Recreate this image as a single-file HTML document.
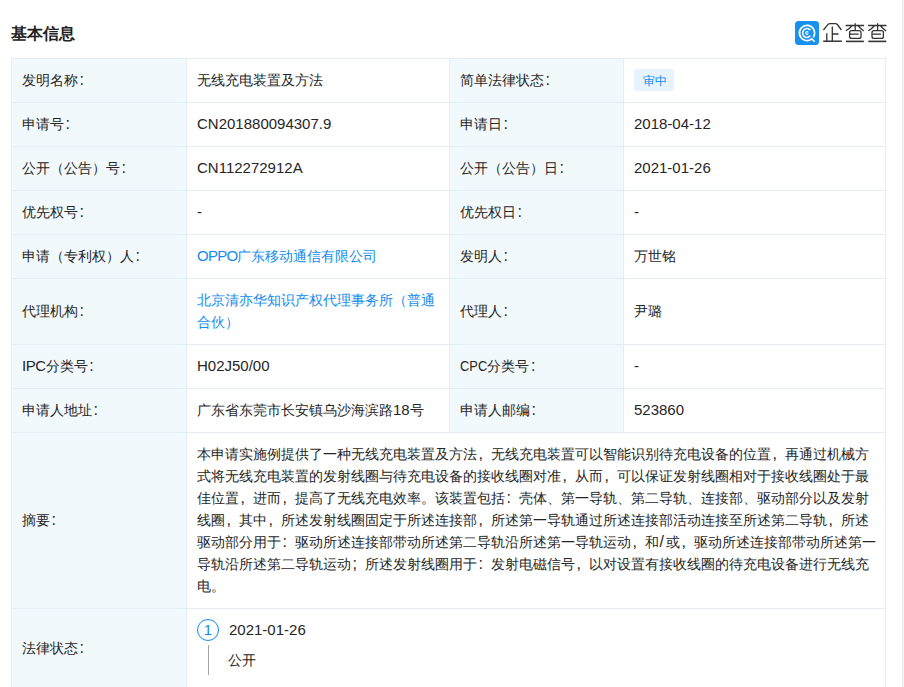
<!DOCTYPE html>
<html><head><meta charset="utf-8">
<style>
html,body{margin:0;padding:0;background:#fff;}
body{width:904px;height:687px;overflow:hidden;position:relative;font-family:"Liberation Sans",sans-serif;color:#262626;font-size:14px;}
.title{position:absolute;left:11px;top:22px;font-size:16px;font-weight:bold;line-height:24px;color:#222;}
.logo{position:absolute;left:795px;top:21px;}
.sb{position:absolute;left:902px;top:0;width:1px;height:687px;background:#ececec;}
.sb2{position:absolute;left:903px;top:0;width:1px;height:687px;background:#f5f5f5;}
table{position:absolute;left:11px;top:58px;border-collapse:collapse;table-layout:fixed;width:874px;}
td{border:1px solid #e4eef6;padding:0 10px 2px;line-height:22px;vertical-align:middle;height:44px;box-sizing:border-box;}
td.tb{background:#f2f9fc;}
.n{font-size:15px;}
a{color:#128bed;text-decoration:none;}
.tag{display:inline-block;background:#e7f4ff;color:#128bed;font-size:12px;line-height:22px;height:22px;padding:0 8px;border-radius:2px;vertical-align:middle;}
.ab div{white-space:nowrap;}
.circ{position:absolute;left:197px;top:619px;width:22px;height:22px;box-sizing:border-box;border:1px solid #128bed;border-radius:50%;color:#128bed;font-size:15px;line-height:20px;text-align:center;}
.dt{position:absolute;left:229px;top:619px;font-size:15px;line-height:22px;}
.vl{position:absolute;left:208px;top:645px;width:1px;height:30px;background:#a3a3a3;}
.ds{position:absolute;left:228px;top:649px;line-height:22px;}
.p{font-style:normal;display:inline-block;width:14px;font-size:16px;padding-left:1.5px;box-sizing:border-box;}
.tag span{position:relative;top:1px;left:1px;}
</style></head><body>
<div class="title">基本信息</div>
<svg class="logo" width="96" height="26" viewBox="0 0 96 26">
<rect x="0" y="0" width="24" height="24" rx="3.5" fill="#1790ee"/>
<g fill="none" stroke="#fff" stroke-linecap="round">
<path d="M16.78 17.91 A7.6 7.6 0 1 1 18.58 15.8" stroke-width="1.7"/>
<path d="M16.6 17.9 L19.2 20.2" stroke-width="1.6"/>
<path d="M14.8 8.67 A4.35 4.35 0 1 0 14.91 15.23" stroke-width="1.7"/>
<path d="M12.9 11.0 A1.35 1.35 0 1 0 12.9 13.0" stroke-width="1.2"/>
</g>
<g fill="none" stroke="#333" stroke-width="1.3">
<path d="M28.4 9.0 L33.1 3.35 Q33.9 2.6 35 2.6 L40.5 2.6 Q41.6 2.6 42.4 3.5 L46.4 9.0"/>
<path d="M37.3 5.6 V20.2 M37.3 13 H43.5 M31.8 12.2 V20.2"/>
<path d="M28.2 20.2 H46.8" stroke-width="1.5"/>
<g>
<path d="M50.7 4.5 H69.1 M60.2 2.2 V9.7 M57.1 4.7 Q54 8 50.9 9.8 M63 4.7 Q66 8 68.7 10 M55 13.2 H63.6"/>
<rect x="54.6" y="9.7" width="11.4" height="7.7" rx="2"/>
<path d="M50.9 20.4 H68.9" stroke-width="1.6"/>
</g>
<g transform="translate(22.4 0)">
<path d="M50.7 4.5 H69.1 M60.2 2.2 V9.7 M57.1 4.7 Q54 8 50.9 9.8 M63 4.7 Q66 8 68.7 10 M55 13.2 H63.6"/>
<rect x="54.6" y="9.7" width="11.4" height="7.7" rx="2"/>
<path d="M50.9 20.4 H68.9" stroke-width="1.6"/>
</g>
</g>
</svg>
<div class="sb"></div><div class="sb2"></div>
<table>
<colgroup><col style="width:175px"><col style="width:263px"><col style="width:174px"><col style="width:262px"></colgroup>
<tr><td class="tb">发明名称<i class="p">:</i></td><td>无线充电装置及方法</td><td class="tb">简单法律状态<i class="p">:</i></td><td><span class="tag"><span>审中</span></span></td></tr>
<tr><td class="tb">申请号<i class="p">:</i></td><td><span class="n">CN201880094307.9</span></td><td class="tb">申请日<i class="p">:</i></td><td><span class="n">2018-04-12</span></td></tr>
<tr><td class="tb">公开（公告）号<i class="p">:</i></td><td><span class="n">CN112272912A</span></td><td class="tb">公开（公告）日<i class="p">:</i></td><td><span class="n">2021-01-26</span></td></tr>
<tr><td class="tb">优先权号<i class="p">:</i></td><td><span class="n">-</span></td><td class="tb">优先权日<i class="p">:</i></td><td><span class="n">-</span></td></tr>
<tr><td class="tb">申请（专利权）人<i class="p">:</i></td><td><a><span class="n" style="letter-spacing:-0.75px">OPPO</span>广东移动通信有限公司</a></td><td class="tb">发明人<i class="p">:</i></td><td>万世铭</td></tr>
<tr><td class="tb" style="height:66px">代理机构<i class="p">:</i></td><td><a>北京清亦华知识产权代理事务所（普通<br>合伙）</a></td><td class="tb">代理人<i class="p">:</i></td><td>尹璐</td></tr>
<tr><td class="tb"><span class="n" style="letter-spacing:-0.45px">IPC</span>分类号<i class="p">:</i></td><td><span class="n">H02J50/00</span></td><td class="tb"><span class="n" style="display:inline-block;transform:scaleX(.86);transform-origin:0 0;margin-right:-4.3px">CPC</span>分类号<i class="p">:</i></td><td><span class="n">-</span></td></tr>
<tr><td class="tb">申请人地址<i class="p">:</i></td><td>广东省东莞市长安镇乌沙海滨路<span class="n">18</span>号</td><td class="tb">申请人邮编<i class="p">:</i></td><td><span class="n">523860</span></td></tr>
<tr><td class="tb" style="height:176px">摘要<i class="p">:</i></td><td colspan="3" class="ab">
<div>本申请实施例提供了一种无线充电装置及方法<i class="p">,</i>无线充电装置可以智能识别待充电设备的位置<i class="p">,</i>再通过机械方</div>
<div>式将无线充电装置的发射线圈与待充电设备的接收线圈对准<i class="p">,</i>从而<i class="p">,</i>可以保证发射线圈相对于接收线圈处于最</div>
<div>佳位置<i class="p">,</i>进而<i class="p">,</i>提高了无线充电效率。该装置包括<i class="p">:</i>壳体、第一导轨、第二导轨、连接部、驱动部分以及发射</div>
<div>线圈<i class="p">,</i>其中<i class="p">,</i>所述发射线圈固定于所述连接部<i class="p">,</i>所述第一导轨通过所述连接部活动连接至所述第二导轨<i class="p">,</i>所述</div>
<div>驱动部分用于<i class="p">:</i>驱动所述连接部带动所述第二导轨沿所述第一导轨运动<i class="p">,</i>和<span class="n" style="display:inline-block;width:7px;font-size:16px;text-indent:0.5px">/</span>或<i class="p">,</i>驱动所述连接部带动所述第一</div>
<div>导轨沿所述第二导轨运动<i class="p">;</i>所述发射线圈用于<i class="p">:</i>发射电磁信号<i class="p">,</i>以对设置有接收线圈的待充电设备进行无线充</div>
<div>电。</div>
</td></tr>
<tr><td class="tb" style="height:81px">法律状态<i class="p">:</i></td><td colspan="3"></td></tr>
</table>
<div class="tl">
<div class="circ">1</div>
<div class="dt">2021-01-26</div>
<div class="vl"></div>
<div class="ds">公开</div>
</div>
</body></html>
